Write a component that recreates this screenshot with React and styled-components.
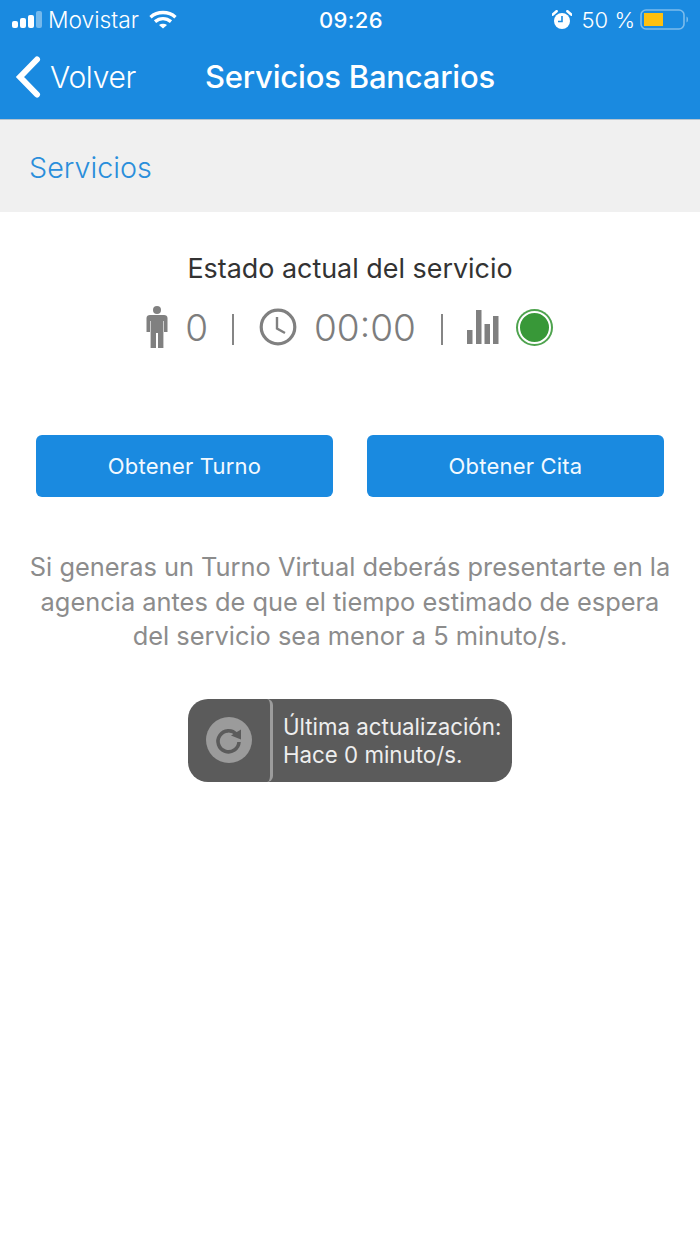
import React from 'react';
import styled, { createGlobalStyle } from 'styled-components';

const GlobalStyle = createGlobalStyle`
  html, body {
    margin: 0;
    padding: 0;
    background: #fff;
  }
  body {
    font-family: Inter, "Liberation Sans", sans-serif;
  }
`;

const Page = styled.div`
  width: 700px;
  height: 1244px;
  background: #fff;
  overflow: hidden;
`;

const Header = styled.header`
  height: 119px;
  background: #1a8ae0;
  color: #fff;
  border-bottom: 1px solid #b5c4cf;
`;

const StatusBar = styled.div`
  height: 39px;
  padding: 0 10px 0 12px;
  display: grid;
  grid-template-columns: 1fr auto 1fr;
  align-items: center;
  font-size: 22px;
`;

const StatusSide = styled.div`
  display: flex;
  align-items: center;
  justify-content: ${p => (p.$end ? 'flex-end' : 'flex-start')};
`;

const Carrier = styled.span`
  margin: 0 10px 0 4px;
  font-size: 22.8px;
  font-weight: 300;
`;

const BatteryText = styled.span`
  margin: 0 5px 0 10px;
  font-weight: 300;
`;

const Clock = styled.div`
  font-weight: 500;
  letter-spacing: 0.4px;
`;

const NavBar = styled.div`
  height: 80px;
  display: flex;
  align-items: center;
  padding: 0 0 5px 15px;
  box-sizing: border-box;
`;

const BackLink = styled.div`
  width: 190px;
  display: flex;
  align-items: center;
  gap: 9px;
  font-size: 30px;
  font-weight: 300;
  letter-spacing: -0.3px;
`;

const NavTitle = styled.div`
  font-size: 31px;
  font-weight: 500;
  letter-spacing: -0.2px;
`;

const SectionBar = styled.div`
  height: 92px;
  padding: 2px 0 0 29px;
  box-sizing: border-box;
  display: flex;
  align-items: center;
  background: #f0f0f0;
  color: #2a8edb;
  font-size: 28.7px;
  font-weight: 300;
`;

const Content = styled.main`
  display: flex;
  flex-direction: column;
  align-items: center;
  padding-top: 41px;
`;

const StateTitle = styled.div`
  font-size: 26.9px;
  line-height: 30px;
  color: #333;
  font-weight: 400;
`;

const StateRow = styled.div`
  display: flex;
  align-items: center;
  margin-top: 21px;
  padding-right: 3px;
  height: 46px;
  color: #7d7d7d;
  font-size: 37px;
  font-weight: 300;
`;

const StateValue = styled.span`
  margin-left: ${p => p.$left}px;
`;

const Divider = styled.span`
  width: 2px;
  height: 31px;
  background: #858585;
  margin: 5px ${p => p.$right}px 0 ${p => p.$left}px;
`;

const StatusDot = styled.span`
  width: 29px;
  height: 29px;
  margin-left: 19px;
  border-radius: 50%;
  background: #389838;
  border: 2px solid #fff;
  box-shadow: 0 0 0 2px #4ea34e;
`;

const Actions = styled.div`
  width: 628px;
  margin-top: 85px;
  display: grid;
  grid-template-columns: 297px 297px;
  justify-content: space-between;
`;

const ActionButton = styled.button`
  height: 62px;
  border: 0;
  border-radius: 6px;
  background: #1a8ae0;
  color: #f2f9ff;
  font-family: inherit;
  font-size: 22px;
  font-weight: 400;
  letter-spacing: 0.2px;
`;

const Notice = styled.p`
  width: 650px;
  margin: 53px 0 0;
  text-align: center;
  color: #8c8c8c;
  font-size: 25.4px;
  line-height: 34.5px;
  font-weight: 400;
`;

const UpdateBadge = styled.div`
  width: 324px;
  height: 83px;
  margin-top: 45px;
  display: flex;
  border-radius: 20px;
  overflow: hidden;
  background: #5b5b5b;
  color: #eee;
`;

const RefreshCell = styled.div`
  width: 85px;
  flex: none;
  display: flex;
  align-items: center;
  justify-content: center;
  box-sizing: border-box;
  border-right: 3px solid #9c9c9c;
  border-radius: 0 6px 6px 0;
`;

const UpdateText = styled.div`
  padding: 14px 0 0 10px;
  font-size: 22.3px;
  line-height: 28.5px;
  white-space: nowrap;
`;

const SignalIcon = () => (
  <svg width="32" height="20" viewBox="0 0 32 20" fill="#fff">
    <rect x="0" y="11" width="6" height="7" rx="2" />
    <rect x="8" y="8" width="6" height="10" rx="2" />
    <rect x="16" y="5" width="6" height="13" rx="2" />
    <rect x="24" y="1" width="6" height="17" rx="2" opacity="0.4" />
  </svg>
);

const WifiIcon = () => (
  <svg width="28" height="20" viewBox="0 0 28 20" fill="none" stroke="#fff" strokeWidth="3.4">
    <path d="M1.5 7.2 C8.5 1 19.5 1 26.5 7.2" />
    <path d="M6 11.6 C10.8 7.6 17.2 7.6 22 11.6" />
    <path d="M14 18.5 L10 15 C12.2 13.4 15.8 13.4 18 15 Z" fill="#fff" stroke="none" />
  </svg>
);

const AlarmIcon = () => (
  <svg width="20" height="20" viewBox="0 0 20 20">
    <circle cx="10" cy="11" r="8" fill="#fff" />
    <path d="M10 6 V11.5 H6" fill="none" stroke="#1a8ae0" strokeWidth="1.6" />
    <path d="M0.8 4.6 L4.6 1.2 M19.2 4.6 L15.4 1.2" stroke="#fff" strokeWidth="2.6" strokeLinecap="round" />
  </svg>
);

const BatteryIcon = () => (
  <svg width="50" height="24" viewBox="0 0 50 24">
    <rect x="1" y="2" width="43" height="19" rx="5" fill="none" stroke="#7cbcec" strokeWidth="1.6" />
    <rect x="4" y="5" width="19" height="13" fill="#fec00f" />
    <path d="M46.5 8.5 C48.5 9 48.5 14 46.5 14.5 Z" fill="#7cbcec" />
  </svg>
);

const ChevronIcon = () => (
  <svg width="26" height="42" viewBox="0 0 26 42" fill="none">
    <path d="M22 3.5 L5 21 L22 38.5" stroke="#fff" strokeWidth="6" strokeLinecap="round" strokeLinejoin="miter" />
  </svg>
);

const PersonIcon = () => (
  <svg width="22" height="42" viewBox="0 0 22 42" fill="#808080">
    <circle cx="11" cy="4" r="4" />
    <path d="M4 9 H18 C20 9 21.5 10 21.5 12 V26 H18 V15 H17.4 V42 H12 V27 H10 V42 H4.6 V15 H4 V26 H0.5 V12 C0.5 10 2 9 4 9 Z" />
  </svg>
);

const ClockIcon = () => (
  <svg width="38" height="38" viewBox="0 0 38 38" fill="none" stroke="#808080" strokeWidth="3.2">
    <circle cx="19" cy="19" r="16.8" />
    <path d="M18 9 V20.5 L26 25" strokeWidth="2.4" />
  </svg>
);

const BarsIcon = () => (
  <svg width="32" height="36" viewBox="0 0 32 36" fill="#808080">
    <rect x="0" y="21" width="5.5" height="14" />
    <rect x="9" y="1" width="5.5" height="34" />
    <rect x="17.5" y="15" width="5.5" height="20" />
    <rect x="26" y="7" width="5.5" height="28" />
  </svg>
);

const RefreshIcon = () => (
  <svg width="46" height="46" viewBox="0 0 46 46">
    <circle cx="23" cy="23" r="23" fill="#9b9b9b" />
    <path d="M30.5 17.5 A10.5 10.5 0 1 0 33 25" fill="none" stroke="#5b5b5b" strokeWidth="3.6" />
    <path d="M25 18.5 L35 12.5 L35 22.5 Z" fill="#5b5b5b" />
  </svg>
);

export default function App() {
  return (
    <Page>
      <GlobalStyle />
      <Header>
        <StatusBar>
          <StatusSide>
            <SignalIcon />
            <Carrier>Movistar</Carrier>
            <WifiIcon />
          </StatusSide>
          <Clock>09:26</Clock>
          <StatusSide $end>
            <AlarmIcon />
            <BatteryText>50 %</BatteryText>
            <BatteryIcon />
          </StatusSide>
        </StatusBar>
        <NavBar>
          <BackLink>
            <ChevronIcon />
            Volver
          </BackLink>
          <NavTitle>Servicios Bancarios</NavTitle>
        </NavBar>
      </Header>
      <SectionBar>Servicios</SectionBar>
      <Content>
        <StateTitle>Estado actual del servicio</StateTitle>
        <StateRow>
          <PersonIcon />
          <StateValue $left={17}>0</StateValue>
          <Divider $left={24} $right={25} />
          <ClockIcon />
          <StateValue $left={17}>00:00</StateValue>
          <Divider $left={25} $right={24} />
          <BarsIcon />
          <StatusDot />
        </StateRow>
        <Actions>
          <ActionButton>Obtener Turno</ActionButton>
          <ActionButton>Obtener Cita</ActionButton>
        </Actions>
        <Notice>
          Si generas un Turno Virtual deberás presentarte en la agencia antes de que el tiempo estimado de espera del servicio sea menor a 5 minuto/s.
        </Notice>
        <UpdateBadge>
          <RefreshCell>
            <RefreshIcon />
          </RefreshCell>
          <UpdateText>
            Última actualización:
            <br />
            Hace 0 minuto/s.
          </UpdateText>
        </UpdateBadge>
      </Content>
    </Page>
  );
}
